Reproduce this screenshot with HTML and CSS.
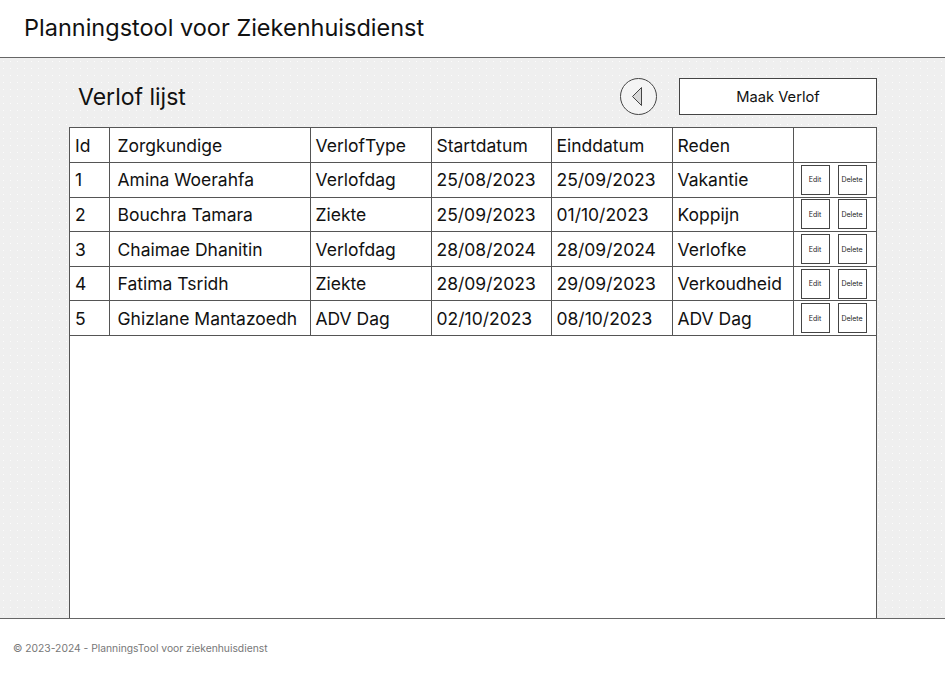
FILE: index.html
```html
<!DOCTYPE html>
<html lang="nl">
<head>
<meta charset="utf-8">
<title>Planningstool voor Ziekenhuisdienst</title>
<link rel="stylesheet" href="styles.css">
</head>
<body>
<header class="topbar">
  <h1 class="app-title">Planningstool voor Ziekenhuisdienst</h1>
</header>
<main class="main">
  <div class="toolbar">
    <h2 class="page-title">Verlof lijst</h2>
    <div class="actions">
      <button class="back-btn" aria-label="Terug">
        <svg width="37" height="37" viewBox="0 0 37 37">
          <circle cx="18.5" cy="18.5" r="18" fill="#f4f4f4" stroke="#444" stroke-width="1"/>
          <path d="M12.5 18.5 L21.5 9.5 L21.5 27.5 Z" fill="#d8d8d8" stroke="#444" stroke-width="1" stroke-linejoin="round"/>
        </svg>
      </button>
      <button class="primary-btn">Maak Verlof</button>
    </div>
  </div>
  <div class="table-box">
    <table class="grid">
      <colgroup>
        <col class="c-id"><col class="c-name"><col class="c-type"><col class="c-start"><col class="c-end"><col class="c-reason"><col class="c-act">
      </colgroup>
      <thead>
        <tr><th>Id</th><th class="name">Zorgkundige</th><th>VerlofType</th><th>Startdatum</th><th>Einddatum</th><th>Reden</th><th></th></tr>
      </thead>
      <tbody>
        <tr><td>1</td><td class="name">Amina Woerahfa</td><td>Verlofdag</td><td>25/08/2023</td><td>25/09/2023</td><td>Vakantie</td><td class="act"><span class="mini-btn">Edit</span><span class="mini-btn">Delete</span></td></tr>
        <tr><td>2</td><td class="name">Bouchra Tamara</td><td>Ziekte</td><td>25/09/2023</td><td>01/10/2023</td><td>Koppijn</td><td class="act"><span class="mini-btn">Edit</span><span class="mini-btn">Delete</span></td></tr>
        <tr><td>3</td><td class="name">Chaimae Dhanitin</td><td>Verlofdag</td><td>28/08/2024</td><td>28/09/2024</td><td>Verlofke</td><td class="act"><span class="mini-btn">Edit</span><span class="mini-btn">Delete</span></td></tr>
        <tr><td>4</td><td class="name">Fatima Tsridh</td><td>Ziekte</td><td>28/09/2023</td><td>29/09/2023</td><td>Verkoudheid</td><td class="act"><span class="mini-btn">Edit</span><span class="mini-btn">Delete</span></td></tr>
        <tr><td>5</td><td class="name">Ghizlane Mantazoedh</td><td>ADV Dag</td><td>02/10/2023</td><td>08/10/2023</td><td>ADV Dag</td><td class="act"><span class="mini-btn">Edit</span><span class="mini-btn">Delete</span></td></tr>
      </tbody>
    </table>
  </div>
</main>
<footer class="footer">© 2023-2024 - PlanningsTool voor ziekenhuisdienst</footer>
</body>
</html>
```
FILE: styles.css
```css
* { box-sizing: border-box; }
html, body { margin: 0; padding: 0; }
body {
  font-family: "Inter", "Noto Sans", "Liberation Sans", sans-serif;
  color: #111;
  background: #fff;
  width: 945px;
  height: 676px;
  display: flex;
  flex-direction: column;
}
.topbar {
  height: 58px;
  border-bottom: 1px solid #666;
  display: flex;
  align-items: center;
  padding: 0 24px 2px;
  background: #fff;
}
.app-title {
  margin: 0;
  font-size: 23.5px;
  font-weight: 400;
}
.main {
  height: 561px;
  background-color: #efefef;
  background-image: radial-gradient(circle, rgba(255,255,255,0.8) 0.6px, transparent 0.8px);
  background-size: 7px 7px;
  border-bottom: 1px solid #666;
  padding: 20px 68px 0 69px;
  display: flex;
  flex-direction: column;
}
.toolbar {
  height: 37px;
  display: flex;
  align-items: center;
  justify-content: space-between;
  margin-bottom: 12px;
}
.page-title {
  margin: 0 0 0 9px;
  font-size: 23px;
  font-weight: 400;
}
.actions {
  display: flex;
  align-items: center;
  gap: 22px;
}
.back-btn {
  width: 37px;
  height: 37px;
  padding: 0;
  border: 0;
  background: transparent;
  display: block;
}
.back-btn svg { display: block; }
.primary-btn {
  width: 198px;
  height: 37px;
  background: #fff;
  border: 1px solid #444;
  font-family: inherit;
  font-size: 14.7px;
  color: #111;
  padding: 0;
}
.table-box {
  flex: 1;
  background: #fff;
  border: 1px solid #555;
  border-bottom: 0;
}
.grid {
  width: 100%;
  border-collapse: collapse;
  table-layout: fixed;
  font-size: 17.5px;
}
.c-id { width: 39px; }
.c-name { width: 201px; }
.c-type { width: 121px; }
.c-start { width: 120px; }
.c-end { width: 121px; }
.c-reason { width: 121px; }
.c-act { width: 84px; }
.grid th, .grid td {
  height: 34.6px;
  padding: 0 0 0 5px;
  text-align: left;
  font-weight: 400;
  border-right: 1px solid #555;
  border-bottom: 1px solid #555;
  white-space: nowrap;
  overflow: hidden;
  vertical-align: middle;
}
.grid th:last-child, .grid td:last-child { border-right: 0; }
.grid .name { padding-left: 8px; }
.grid td.act { padding-left: 7px; }
.act { font-size: 0; }
.mini-btn {
  display: inline-flex;
  align-items: center;
  justify-content: center;
  width: 29px;
  height: 30px;
  border: 1px solid #444;
  font-size: 7px;
  color: #222;
  vertical-align: middle;
}
.mini-btn + .mini-btn { margin-left: 8px; }
.footer {
  flex: 1;
  padding: 23px 13px 0;
  font-size: 10.3px;
  color: #777;
}
```
